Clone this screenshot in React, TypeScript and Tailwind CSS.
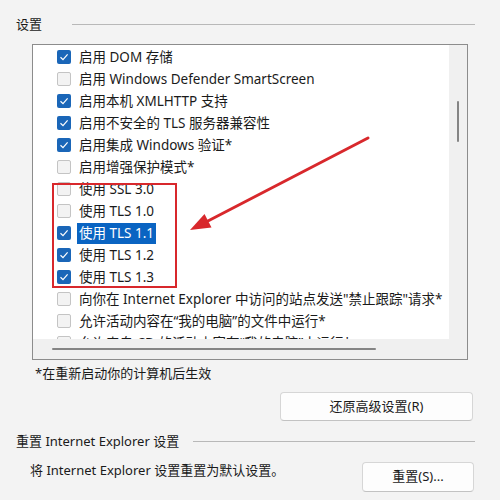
import React from 'react';

type Item = { label: string; checked: boolean; selected?: boolean };

const items: Item[] = [
  { label: '启用 DOM 存储', checked: true },
  { label: '启用 Windows Defender SmartScreen', checked: false },
  { label: '启用本机 XMLHTTP 支持', checked: true },
  { label: '启用不安全的 TLS 服务器兼容性', checked: true },
  { label: '启用集成 Windows 验证*', checked: true },
  { label: '启用增强保护模式*', checked: false },
  { label: '使用 SSL 3.0', checked: false },
  { label: '使用 TLS 1.0', checked: false },
  { label: '使用 TLS 1.1', checked: true, selected: true },
  { label: '使用 TLS 1.2', checked: true },
  { label: '使用 TLS 1.3', checked: true },
  { label: '向你在 Internet Explorer 中访问的站点发送"禁止跟踪"请求*', checked: false },
  { label: '允许活动内容在“我的电脑”的文件中运行*', checked: false },
  { label: '允许来自 CD 的活动内容在“我的电脑”中运行*', checked: false },
];

function CheckBox({ checked }: { checked: boolean }) {
  if (checked) {
    return (
      <span className="flex h-[14px] w-[14px] shrink-0 items-center justify-center rounded-[2px] bg-[#1a66b8]">
        <svg width="10" height="10" viewBox="0 0 10 10">
          <polyline points="1.5,5.2 4,7.6 8.6,2.4" fill="none" stroke="#ffffff" strokeWidth="1.2" />
        </svg>
      </span>
    );
  }
  return <span className="h-[14px] w-[14px] shrink-0 rounded-[2px] border border-[#c4c4c4] bg-[#f3f3f3]" />;
}

function Button({ children, className }: { children: React.ReactNode; className: string }) {
  return (
    <button className={`flex items-center justify-center rounded-[4px] border border-[#d6d6d6] border-b-[#c2c2c2] bg-[#fdfdfd] text-[13px] text-[#1a1a1a] ${className}`}>
      {children}
    </button>
  );
}

export default function App() {
  return (
    <div
      className="relative h-[500px] w-[500px] overflow-hidden bg-[#f3f3f3] pl-4 pr-[25px] text-[13px] text-[#1a1a1a]"
      style={{ fontFamily: '"Noto Sans", "Noto Sans CJK SC", sans-serif' }}
    >
      <div className="mt-[14px] flex h-5 items-center gap-[30px]">
        <span className="leading-5">设置</span>
        <div className="h-px flex-1 bg-[#b8b8b8]" />
      </div>

      <div className="ml-4 mr-[7px] mt-[10px] flex h-[316px] flex-col border border-[#8c8c8c] bg-white">
        <div className="flex min-h-0 flex-1">
          <div className="flex-1 overflow-hidden pl-[24px] pt-[1px] text-[13.5px]">
            {items.map((it) => (
              <div key={it.label} className="flex h-[22px] items-center whitespace-nowrap">
                <CheckBox checked={it.checked} />
                <span
                  className={`ml-[6px] px-[2px] leading-[21px] ${it.selected ? 'bg-[#0a64c2] text-white' : ''}`}
                >
                  {it.label}
                </span>
              </div>
            ))}
          </div>
          <div className="flex w-[18px] justify-center bg-[#f0f0f0] pt-[56px]">
            <div className="h-[41px] w-[2px] rounded-full bg-[#858585]" />
          </div>
        </div>
        <div className="flex h-5 items-center bg-[#f0f0f0] pl-[19px]">
          <div className="h-[2px] w-[324px] rounded-full bg-[#858585]" />
        </div>
      </div>

      <div className="ml-[19px] mt-1 leading-[18px]">*在重新启动你的计算机后生效</div>

      <div className="mt-[10px] flex justify-end pr-[2px]">
        <Button className="h-[29px] w-[193px]">还原高级设置(R)</Button>
      </div>

      <div className="mt-[10px] flex h-5 items-center gap-[14px]">
        <span className="leading-5">重置 Internet Explorer 设置</span>
        <div className="h-px flex-1 bg-[#b8b8b8]" />
      </div>

      <div className="mt-[10px] flex items-start justify-between">
        <span className="ml-[14px] leading-[18px]">将 Internet Explorer 设置重置为默认设置。</span>
        <Button className="mr-[1px] mt-[1px] h-[30px] w-[112px]">重置(S)...</Button>
      </div>

      <div className="pointer-events-none absolute left-[52px] top-[183px] h-[105px] w-[125px] border-[2.5px] border-[#d8282c]" />
      <svg className="pointer-events-none absolute left-0 top-0" width="500" height="500" viewBox="0 0 500 500">
        <line x1="368" y1="138" x2="206" y2="222" stroke="#d8282c" strokeWidth="3" strokeLinecap="round" />
        <polygon points="190,230 211.5,227.5 204.5,214" fill="#d8282c" />
      </svg>
    </div>
  );
}
